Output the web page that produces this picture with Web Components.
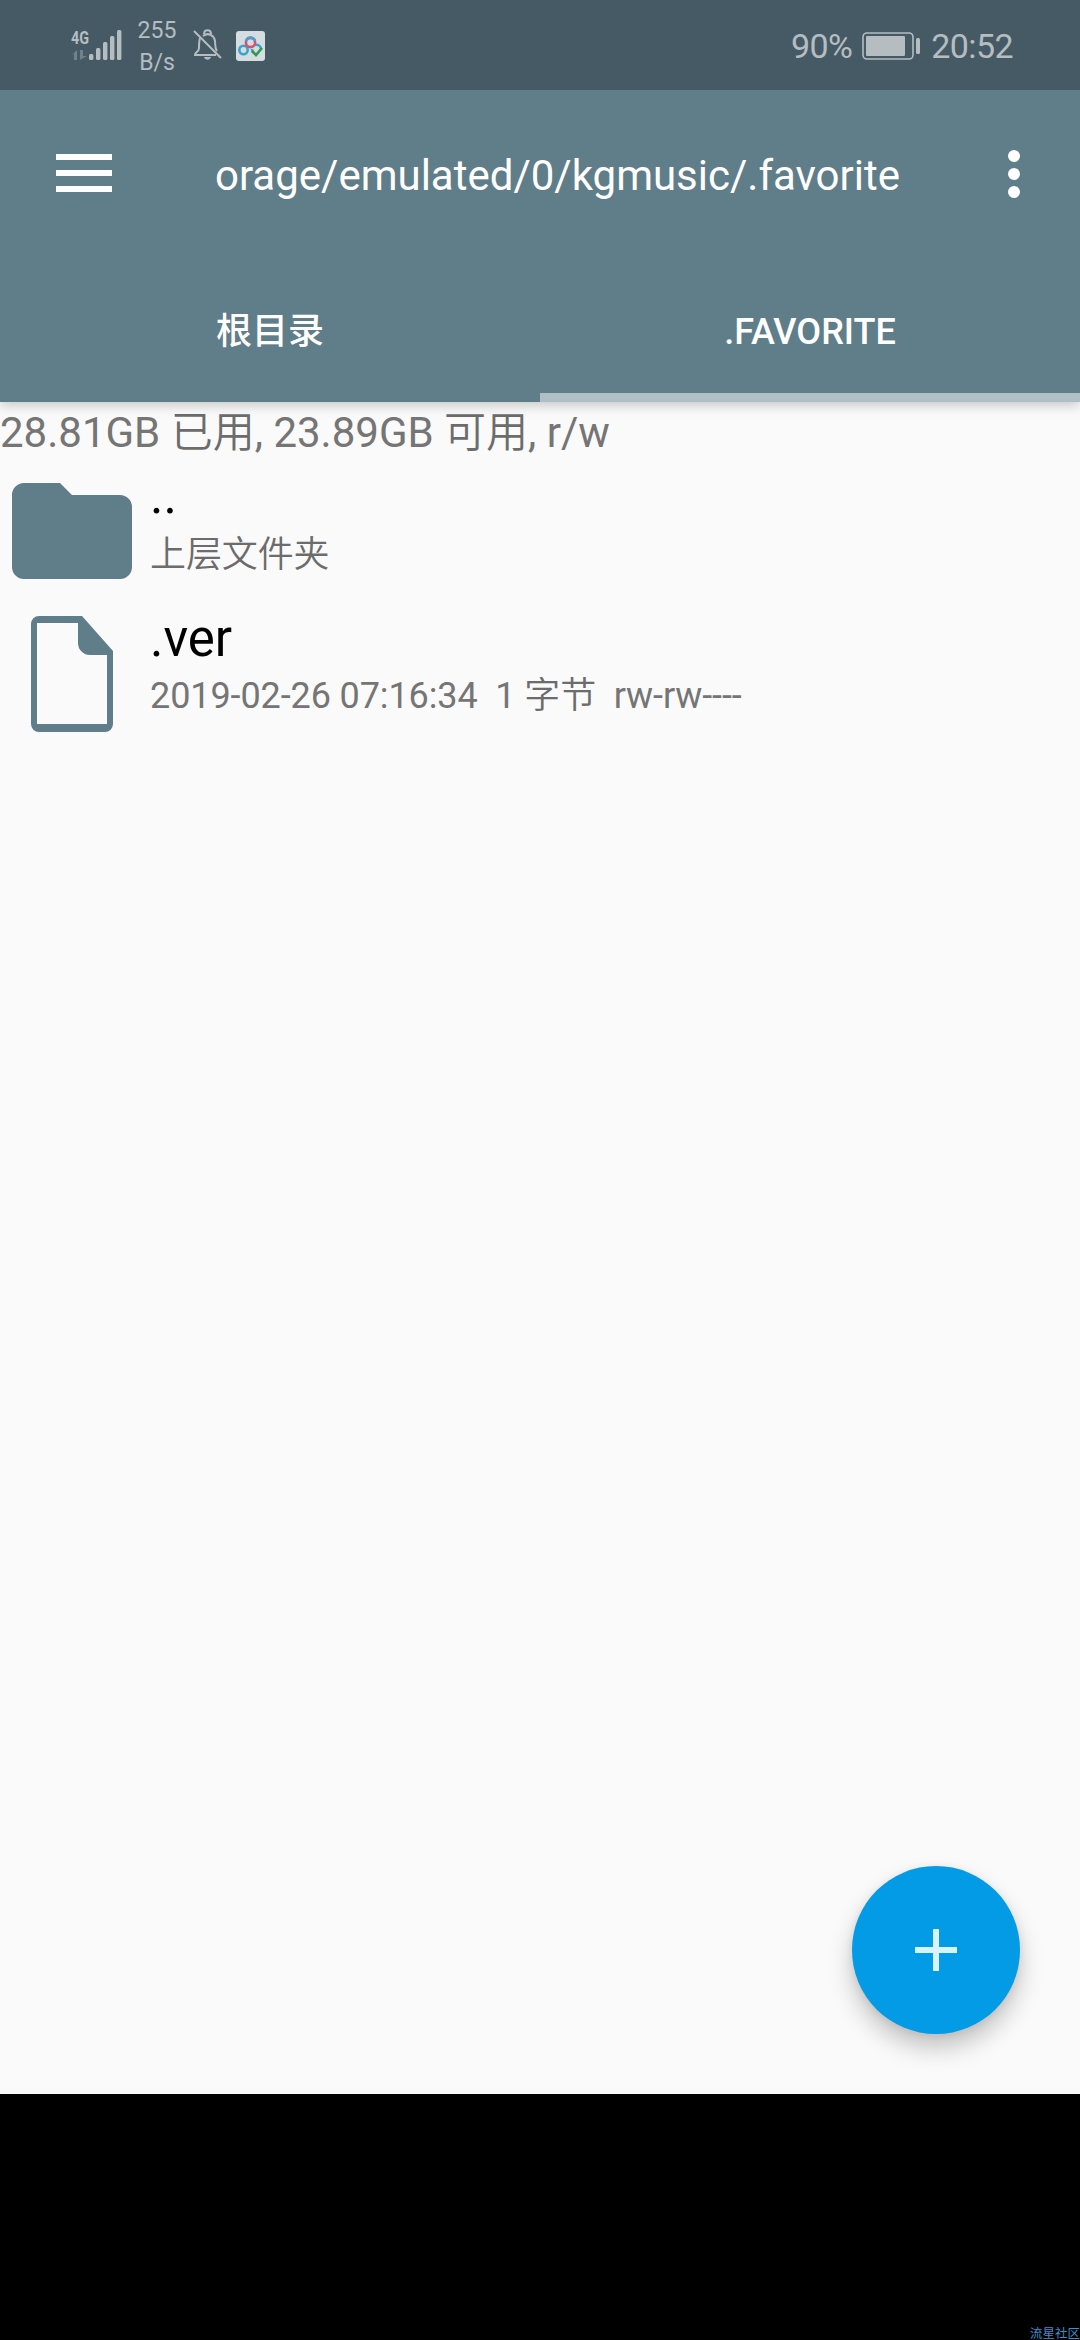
<!DOCTYPE html>
<html lang="zh-CN">
<head>
<meta charset="UTF-8">
<title>.favorite</title>
<style>
  body {
    margin: 0;
    width: 1080px;
    height: 2340px;
    overflow: hidden;
    background: #000;
    font-family: Roboto, "Noto Sans CJK SC", sans-serif;
  }
</style>
</head>
<body>
<file-manager></file-manager>

<script>
// Status bar
class StatusBar extends HTMLElement {
  constructor() {
    super();
    const shadow = this.attachShadow({ mode: "open" });
    shadow.innerHTML = `
      <style>
        :host {
          display: flex;
          box-sizing: border-box;
          height: 90px;
          padding: 0 67px 0 70px;
          background: #465a65;
          color: #b5bdc1;
          justify-content: space-between;
        }
        svg { display: block; flex: none; }
        .left, .right { display: flex; align-items: center; }
        .rate {
          width: 40px;
          margin: 0 16px 0 15px;
          font-size: 23px;
          line-height: 32px;
          text-align: center;
          padding-top: 4px;
        }
        .bell { margin-right: 13px; }
        .right { font-size: 34px; letter-spacing: -.6px; padding-top: 2px; }
        .battery { margin: 0 10px 0 10px; }
      </style>
      <div class="left">
        <svg width="52" height="90" viewBox="0 0 52 90" fill="#b5bdc1">
          <text x="1" y="43.500" font-size="19" font-weight="700" textLength="18" lengthAdjust="spacingAndGlyphs">4G</text>
          <path d="M2 55l5-5v10H4v-6zM10 50h3v6h4l-7 4z" fill="#71808a"/>
          <rect x="19" y="54" width="4.400" height="6" rx="1.500"/>
          <rect x="26" y="48" width="4.400" height="12" rx="1.500"/>
          <rect x="33" y="42" width="4.400" height="18" rx="1.500"/>
          <rect x="40" y="36" width="4.400" height="24" rx="1.500"/>
          <rect x="47" y="30" width="4.400" height="30" rx="1.500"/>
        </svg>
        <div class="rate">255<br>B/s</div>
        <svg class="bell" width="29" height="90" viewBox="0 0 29 90" fill="none" stroke="#b5bdc1" stroke-width="2">
          <path d="M7 38C6 41 6 44 6 48c0 4-4 4-4 7h21M10 36c5-4 11-1 12 5 .5 4-.5 7 2 10M11 34c0-5 7-5 7 0"/>
          <path d="M1 31l27 27"/>
          <path d="M11 57h7c-1 3.500-6 3.500-7 0z" fill="#b5bdc1" stroke="none"/>
        </svg>
        <svg width="30" height="90" viewBox="0 0 30 90" fill="none">
          <rect x="1" y="31" width="29" height="30" rx="3" fill="#d5dde1"/>
          <g stroke-width="2.600">
            <circle cx="8.500" cy="50" r="4.200" stroke="#38a5d0"/>
            <path d="M20 45a4.500 4.500 0 0 1 6 4M17 49a4.500 4.500 0 0 0 2 4" stroke="#38a5d0"/>
            <circle cx="15.500" cy="42.500" r="4.600" stroke="#d9536b"/>
            <path d="M11 41a4.700 4.700 0 0 1 9 0" stroke="#4d9fd0"/>
            <path d="M17 51l4 4 6-7" stroke="#2e9a50"/>
          </g>
        </svg>
      </div>
      <div class="right">
        <span>90%</span>
        <svg class="battery" width="59" height="28" viewBox="0 0 59 28">
          <rect x="1" y="1" width="50" height="26" rx="4" fill="none" stroke="#b5bdc1" stroke-width="1.600"/>
          <rect x="4" y="4" width="39" height="20" rx="1" fill="#b5bdc1"/>
          <rect x="54" y="6" width="4" height="16" rx="1.500" fill="#b5bdc1"/>
        </svg>
        <span>20:52</span>
      </div>
    `;
  }
}
customElements.define("status-bar", StatusBar);

// Toolbar: menu, path, overflow
class PathToolbar extends HTMLElement {
  constructor() {
    super();
    const shadow = this.attachShadow({ mode: "open" });
    shadow.innerHTML = `
      <style>
        :host {
          display: flex;
          box-sizing: border-box;
          height: 168px;
          padding: 0 59px 0 56px;
          align-items: center;
          color: #fff;
          background: #607d8a;
        }
        svg { display: block; flex: none; }
        .menu { margin-bottom: 2px; }
        .path {
          flex: 1;
          margin-left: 103px;
          padding-top: 3px;
          font-size: 42px;
          white-space: nowrap;
        }
      </style>
      <svg class="menu" width="56" height="38" fill="#fff">
        <rect width="56" height="6"/><rect y="16" width="56" height="6"/><rect y="32" width="56" height="6"/>
      </svg>
      <div class="path"><slot></slot></div>
      <svg width="14" height="50" fill="#fff">
        <circle cx="7" cy="7" r="6"/><circle cx="7" cy="25" r="6"/><circle cx="7" cy="43" r="6"/>
      </svg>
    `;
  }
}
customElements.define("path-toolbar", PathToolbar);

// One tab of the strip, "active" shows the indicator
class FolderTab extends HTMLElement {
  constructor() {
    super();
    const shadow = this.attachShadow({ mode: "open" });
    shadow.innerHTML = `
      <style>
        :host {
          display: flex;
          flex: 1;
          box-sizing: border-box;
          height: 144px;
          padding-top: 12px;
          align-items: center;
          justify-content: center;
          border-bottom: 9px solid transparent;
          color: #fff;
          font-size: 36px;
          line-height: 48px;
          font-weight: 500;
        }
        :host([active]) { border-bottom-color: #b0bec5; }
      </style>
      <span><slot></slot></span>
    `;
  }
}
customElements.define("folder-tab", FolderTab);

class TabStrip extends HTMLElement {
  constructor() {
    super();
    const shadow = this.attachShadow({ mode: "open" });
    shadow.innerHTML = `
      <style>
        :host {
          display: flex;
          position: relative;
          background: #607d8a;
          box-shadow: 0 3px 12px rgba(0,0,0,.22);
          clip-path: inset(0 0 -24px 0);
        }
      </style>
      <slot></slot>
    `;
  }
}
customElements.define("tab-strip", TabStrip);

// File row: icon on the left, name over details
class FileRow extends HTMLElement {
  constructor() {
    super();
    const shadow = this.attachShadow({ mode: "open" });
    const icons = {
      folder: `<path d="M24 12H60L72 24H120a12 12 0 0 1 12 12V96a12 12 0 0 1-12 12H24a12 12 0 0 1-12-12V24a12 12 0 0 1 12-12z"/>`,
      file: `<path fill-rule="evenodd" d="M39 10H82L113 45V118a8 8 0 0 1-8 8H39a8 8 0 0 1-8-8V18a8 8 0 0 1 8-8zM37 17V118H107V49H90a12 12 0 0 1-12-12V17z"/>`
    };
    shadow.innerHTML = `
      <style>
        :host { display: flex; height: var(--row-height, 130px); color: #000; }
        svg { display: block; flex: none; margin-right: 6px; }
        .name { font-size: 51px; line-height: var(--name-line, 66px); height: var(--name-height, 66px); }
        .details { font-size: 36px; line-height: 48px; letter-spacing: -.1px; color: #757575; white-space: pre; }
      </style>
      <svg width="144" height="136" viewBox="0 0 144 136" fill="#607d8a">${icons[this.getAttribute("icon")]}</svg>
      <div>
        <div class="name"><slot name="name"></slot></div>
        <div class="details"><slot></slot></div>
      </div>
    `;
  }
}
customElements.define("file-row", FileRow);

// Floating "add" button
class AddButton extends HTMLElement {
  constructor() {
    super();
    const shadow = this.attachShadow({ mode: "open" });
    shadow.innerHTML = `
      <style>
        :host {
          display: block;
          width: 168px;
          height: 168px;
          border-radius: 50%;
          background: #039be5;
          box-shadow: 0 14px 24px rgba(0,0,0,.22), 0 2px 8px rgba(0,0,0,.08);
        }
        svg { display: block; }
      </style>
      <svg width="168" height="168" fill="#d9f3fe">
        <path d="M81 63h6v18h18v6H87v18h-6V87H63v-6h18z"/>
      </svg>
    `;
  }
}
customElements.define("add-button", AddButton);

class FileManager extends HTMLElement {
  constructor() {
    super();
    const shadow = this.attachShadow({ mode: "open" });
    shadow.innerHTML = `
      <style>
        :host { display: flex; flex-direction: column; height: 2340px; }
        main {
          position: relative;
          flex: 1;
          background: #fafafa;
          display: flex;
          flex-direction: column;
        }
        tab-strip { z-index: 1; }
        .usage { height: 69px; line-height: 62px; font-size: 42px; color: #757575; white-space: nowrap; }
        .light { font-weight: 350; color: #6c6c6c; }
        .up { --name-line: 50px; --name-height: 60px; --row-height: 135px; }
        add-button { position: absolute; right: 60px; bottom: 60px; }
        footer {
          height: 246px;
          display: flex;
          align-items: flex-end;
          justify-content: flex-end;
          overflow: hidden;
          background: #000;
          color: #3a90cc;
          font-size: 12.5px;
          line-height: 12px;
        }
      </style>
      <status-bar></status-bar>
      <path-toolbar>orage/emulated/0/kgmusic/.favorite</path-toolbar>
      <tab-strip>
        <folder-tab>根目录</folder-tab>
        <folder-tab active>.FAVORITE</folder-tab>
      </tab-strip>
      <main>
        <div class="usage">28.81GB <span class="light">已用</span>, 23.89GB <span class="light">可用</span>, r/w</div>
        <file-row class="up" icon="folder"><span slot="name">..</span><span class="light">上层文件夹</span></file-row>
        <file-row icon="file"><span slot="name">.ver</span>2019-02-26 07:16:34  1 <span class="light">字节</span>  rw-rw----</file-row>
        <add-button></add-button>
      </main>
      <footer>流星社区</footer>
    `;
  }
}
customElements.define("file-manager", FileManager);
</script>
</body>
</html>
